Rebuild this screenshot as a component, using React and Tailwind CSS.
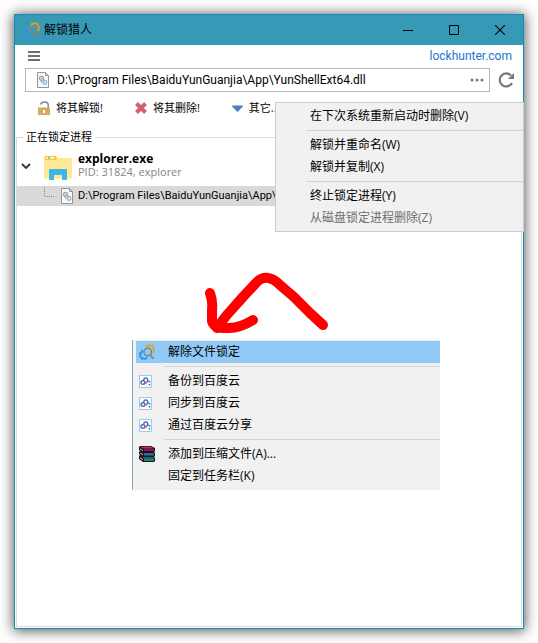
import React from "react";

function HunterIcon({ muted = false }) {
  return (
    <svg width="16" height="16" viewBox="0 0 16 16" fill="none" aria-hidden="true" className="shrink-0">
      <path d="M7.500 4l.2-2.200 1.700.3L10.300 .7l1.300 1.300 1.900-.5.300 1.900 1.500 1-.9 1.700.7 1.700-1.700.7" stroke="#e6a312" strokeWidth="1.500" />
      <path d="M4.500 6.500l-1.500.3-.2 1.700-2 .6.8 1.700-1 1.700 1.800.7.5 1.700 1.700-.6 1.700.8.9-1.400 1.300-.2" stroke="#2b95f5" strokeWidth="1.700" />
      <circle cx="8.700" cy="8" r="3.700" stroke={muted ? "#8d8480" : "#7d8792"} strokeWidth="1.500" />
      <path d="M11.200 10.800l3.300 4.200" stroke={muted ? "#8d7c78" : "#8b8784"} strokeWidth="2" />
    </svg>
  );
}

function DllIcon() {
  return (
    <svg width="12" height="16" viewBox="0 0 12 16" fill="none" aria-hidden="true" className="shrink-0">
      <path d="M.5.5h8l3 3v12H.5z" fill="#f8f8f8" stroke="#959595" />
      <path d="M8.500.5v3h3" stroke="#959595" />
      <circle cx="4.500" cy="6.500" r="2" stroke="#a2a2a2" strokeWidth="1.300" />
      <circle cx="5.500" cy="8.500" r="2" stroke="#b0b0b0" />
      <circle cx="8" cy="10.500" r="1.800" stroke="#8fb4cf" strokeWidth="1.300" />
    </svg>
  );
}

function LockIcon() {
  return (
    <svg width="12" height="14" viewBox="0 0 12 14" fill="none" aria-hidden="true">
      <path d="M2.500 3.500Q3.500 1 6.500 1Q10.200 1 10.200 4V6.500" stroke="#858585" strokeWidth="1.500" />
      <path d="M0 6.500h12V14H0z" fill="#d3ab62" />
      <path d="M5 9h2v3H5z" fill="#fff" />
    </svg>
  );
}

function CrossIcon() {
  return (
    <svg width="12" height="12" viewBox="0 0 12 12" aria-hidden="true">
      <path d="M1.500 1.500l9 9M10.500 1.500l-9 9" stroke="#d16073" strokeWidth="4" />
    </svg>
  );
}

function FolderIcon() {
  return (
    <svg width="28" height="24" viewBox="0 0 28 24" aria-hidden="true" className="shrink-0">
      <path d="M0 1Q0 0 1 0H12l1 2h14q1 0 1 1v19.500H0z" fill="#ffe793" />
      <path d="M1 0h11l1 2-1 2H1z" fill="#ffc831" />
      <path d="M2 1.200h8v1.500H2z" fill="#fff" />
      <path d="M4 1.200h2v1.500H4z" fill="#57b7dc" />
      <path d="M5 14q0-1 1-1h16q1 0 1 1v10h-5v-5h-8v5H5z" fill="#3fb6e8" />
    </svg>
  );
}

function BaiduIcon() {
  return (
    <svg width="13" height="13" viewBox="0 0 13 13" fill="none" aria-hidden="true">
      <path d="M.5.5h12v12H.5z" fill="#fff" stroke="#a9c6df" />
      <path d="M4.800 5Q4.800 2.800 6.800 2.800Q8.700 2.800 8.700 5Q8.700 7 6.500 8.500" stroke="#1676dc" strokeWidth="1.300" />
      <path d="M4.500 5.500Q2 5.500 2 7.500Q2 9.300 4 9.300" stroke="#1676dc" strokeWidth="1.300" />
      <path d="M4 5.700Q6 5.700 6 7.500Q6 9.200 4 9.200" stroke="#e02b31" strokeWidth="1.300" />
      <path d="M8.500 5.500l1.500 1" stroke="#1676dc" strokeWidth="1.200" />
      <path d="M10 6h1.300v1.500H10zM9.700 9h1.500v1.500H9.700z" fill="#1676dc" />
    </svg>
  );
}

function ArchiveIcon() {
  return (
    <svg width="16" height="16" viewBox="0 0 16 16" aria-hidden="true">
      <path d="M0 1l1-1h11l4 2v3l-1 1 1 1v3l-1 1 1 1v3l-1 1H4l-4-3v-3l1-1-1-1V6l1-1-1-1z" fill="#241018" />
      <path d="M1 .7h11l2.500 1.800H4.500z" fill="#b82c78" />
      <path d="M5 3h10v2H5z" fill="#8c1452" />
      <path d="M5 7.500h10v2H5z" fill="#1e74bd" />
      <path d="M2 6l2 1h10l1 .5H5z" fill="#3d94d0" />
      <path d="M5 12.500h10v2.500H5z" fill="#10926d" />
      <path d="M2 10.500l2 1h10l1 .8H5z" fill="#2db48c" />
      <path d="M1 2.500l3 1.700v.8L1 3.300zM1 6.800l3 1.700v.8L1 7.600zM1 11.500l3 1.700v.8L1 12.300z" fill="#eee" />
    </svg>
  );
}

function MenuItem({ icon, children, active, disabled }) {
  return (
    <button
      type="button"
      role="menuitem"
      disabled={disabled}
      className={`flex h-[22px] w-full items-center text-left ${active ? "bg-[#91c9f7]" : ""} ${disabled ? "text-[#6d6d6d]" : "text-black"}`}
    >
      <span className="flex w-8 shrink-0 items-center pl-[3px]">{icon}</span>
      {children}
    </button>
  );
}

function Separator({ className }) {
  return (
    <div role="separator" className={`flex h-[7px] items-center ${className}`}>
      <div className="h-px w-full bg-[#d4d4d4]" />
    </div>
  );
}

export default function App() {
  return (
    <div className="flex min-h-screen bg-white p-[14px] font-['Open_Sans','Noto_Sans_CJK_SC',sans-serif] text-xs text-black">
      <main className="relative flex min-w-0 flex-1 flex-col border border-[#128cae] bg-white shadow-[0_1px_12px_1px_rgba(0,0,0,0.65)]">
        <header className="flex h-[30px] items-center bg-[#3699b5] pl-[9px]">
          <HunterIcon muted />
          <h1 className="ml-1 flex-1">解锁猎人</h1>
          <button type="button" aria-label="最小化" className="flex h-full w-[46px] items-center justify-center">
            <svg width="10" height="11" viewBox="0 0 10 11"><path d="M0 5.500h10" stroke="#000" /></svg>
          </button>
          <button type="button" aria-label="最大化" className="flex h-full w-[46px] items-center justify-center">
            <svg width="10" height="10" viewBox="0 0 10 10"><path d="M.5.5h9v9h-9z" stroke="#000" fill="none" /></svg>
          </button>
          <button type="button" aria-label="关闭" className="flex h-full w-[46px] items-center justify-center">
            <svg width="10" height="10" viewBox="0 0 10 10"><path d="M0 0l10 10M10 0L0 10" stroke="#000" strokeWidth="1.100" /></svg>
          </button>
        </header>

        <div className="flex h-[23px] items-center justify-between pr-[11px] pb-px pl-[13px]">
          <button type="button" aria-label="菜单" className="flex w-3 flex-col gap-[2px]">
            <span className="h-[2px] w-full bg-[#6e6e6e]" />
            <span className="h-[2px] w-full bg-[#6e6e6e]" />
            <span className="h-[2px] w-full bg-[#6e6e6e]" />
          </button>
          <a href="#site" className="font-['Roboto',sans-serif] text-[#2474cc]">lockhunter.com</a>
        </div>

        <div className="flex items-center gap-2 pr-2 pl-[10px]">
          <div className="flex h-6 min-w-0 flex-1 items-center border border-[#b7b7b7] pr-[5px] pl-[11px]">
            <DllIcon />
            <input
              aria-label="文件路径"
              defaultValue="D:\Program Files\BaiduYunGuanjia\App\YunShellExt64.dll"
              className="ml-2 min-w-0 flex-1 bg-transparent font-['Roboto',sans-serif] outline-none"
            />
            <button type="button" aria-label="浏览" className="flex h-full items-center">
              <svg width="14" height="4" viewBox="0 0 14 4" fill="#777"><circle cx="2" cy="2" r="1.500" /><circle cx="7" cy="2" r="1.500" /><circle cx="12" cy="2" r="1.500" /></svg>
            </button>
          </div>
          <button type="button" aria-label="刷新">
            <svg width="17" height="16" viewBox="0 0 17 16" fill="none">
              <path d="M13 3.500A6.500 6.500 0 1 0 14 11" stroke="#777" strokeWidth="2.200" />
              <path d="M16 1v6h-6z" fill="#777" />
            </svg>
          </button>
        </div>

        <div className="flex h-8 items-center gap-8 pl-[23px] text-[11px]">
          <button type="button" className="flex items-center gap-[6px]"><LockIcon />将其解锁!</button>
          <button type="button" className="flex items-center gap-[6px]"><CrossIcon />将其删除!</button>
          <button type="button" className="flex items-center gap-[6px]">
            <svg width="11" height="7" viewBox="0 0 11 7" aria-hidden="true" fill="#4a80c0"><path d="M0 1.500Q0 .5 1 .5h9q1 0 1 1L5.500 7z" /></svg>
            其它...
          </button>
        </div>

        <fieldset className="mx-px mt-1 mb-px min-w-0 flex-1 border border-[#dadada] text-[11px]">
          <legend className="ml-[6px] h-[18px] px-[3px] leading-[18px]">正在锁定进程</legend>
          <div className="mt-[6px] flex items-center pl-[4px]">
            <button type="button" aria-label="收起">
              <svg width="10" height="7" viewBox="0 0 10 7" fill="none"><path d="M1 1l4 4 4-4" stroke="#333" strokeWidth="1.800" /></svg>
            </button>
            <span className="mt-1 ml-[13px] flex"><FolderIcon /></span>
            <div className="ml-[6px] self-start leading-[13px]">
              <p className="text-xs leading-[13px] font-bold">explorer.exe</p>
              <p className="text-[#858585]">PID: 31824, explorer</p>
            </div>
          </div>
          <div className="mt-[6px] flex h-5 items-center bg-[#d9d9d9] pl-[27px]">
            <svg width="10" height="18" viewBox="0 0 10 18" fill="none" className="mr-[7px]" aria-hidden="true">
              <path d="M.5 0v9.500H10" stroke="#888" strokeDasharray="1 1" />
            </svg>
            <DllIcon />
            <span className="ml-[5px] flex-1 truncate font-['Roboto',sans-serif]">D:\Program Files\BaiduYunGuanjia\App\YunShellExt64.dll</span>
          </div>
        </fieldset>

        <div role="menu" aria-label="其它" className="absolute top-[87px] right-[-1px] w-[249px] border border-[#cccccc] bg-[#f1f1f1] py-[2px] pl-[2px]">
          <MenuItem>在下次系统重新启动时删除(V)</MenuItem>
          <Separator className="ml-7" />
          <MenuItem>解锁并重命名(W)</MenuItem>
          <MenuItem>解锁并复制(X)</MenuItem>
          <Separator className="ml-7" />
          <MenuItem>终止锁定进程(Y)</MenuItem>
          <MenuItem disabled>从磁盘锁定进程删除(Z)</MenuItem>
        </div>

        <svg width="130" height="68" viewBox="0 0 130 68" fill="none" aria-hidden="true" className="absolute top-[252px] left-[187px]">
          <g stroke="#f00" strokeWidth="10" strokeLinecap="round" strokeLinejoin="round">
            <path d="M121 58L108 46L92 30L78 18Q64 4 53 17L40 31L24 49L15 61" />
            <path d="M8 26Q11 34 10 43L10 54Q12 62 27 61Q38 61 51 53" />
          </g>
        </svg>

        <div role="menu" aria-label="文件" className="absolute top-[325px] left-[117px] h-[150px] w-[308px] border-l border-[#7fa9b8] bg-[#f1f1f1] pt-px pl-[3px]">
          <MenuItem active icon={<HunterIcon />}>解除文件锁定</MenuItem>
          <Separator className="ml-7" />
          <MenuItem icon={<BaiduIcon />}>备份到百度云</MenuItem>
          <MenuItem icon={<BaiduIcon />}>同步到百度云</MenuItem>
          <MenuItem icon={<BaiduIcon />}>通过百度云分享</MenuItem>
          <Separator className="ml-7" />
          <MenuItem icon={<ArchiveIcon />}>添加到压缩文件(A)...</MenuItem>
          <MenuItem>固定到任务栏(K)</MenuItem>
        </div>
      </main>
    </div>
  );
}
